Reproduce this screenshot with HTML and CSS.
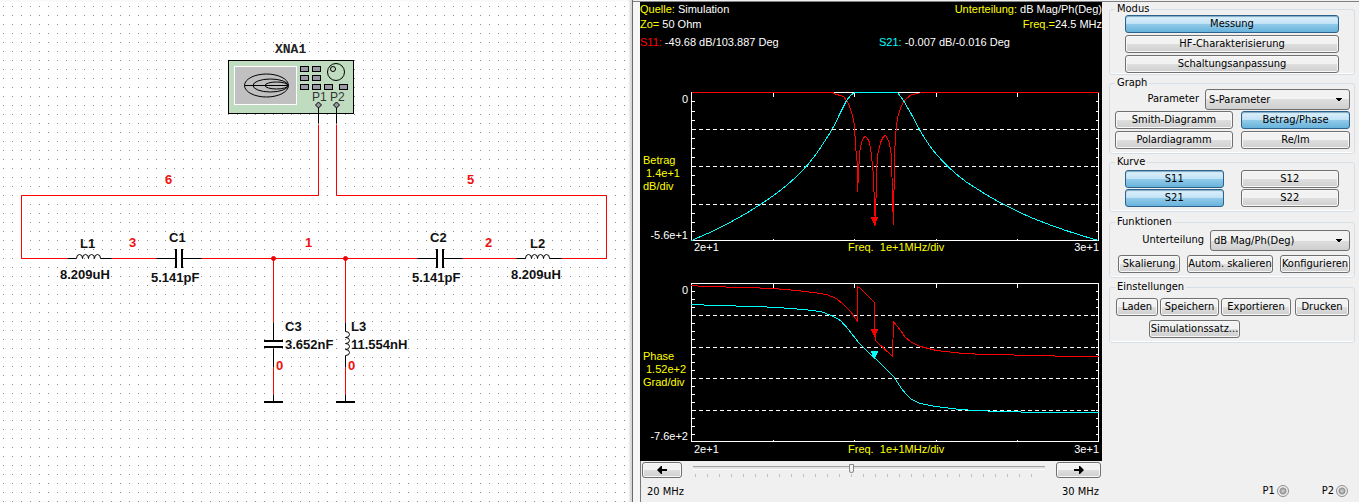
FILE: index.html
```html
<!DOCTYPE html>
<html lang="de">
<head>
<meta charset="UTF-8">
<meta name="viewport" content="width=device-width, initial-scale=1.0">
<title>Netzwerkanalysator XNA1</title>
<link rel="stylesheet" href="styles.css">
</head>
<body>

<main class="workspace">
    <section class="schematic">
        <svg class="circuit" role="img" aria-label="Schaltplan">
            <defs>
                <pattern id="grid" width="9" height="9" patternUnits="userSpaceOnUse">
                    <rect x="3" y="6" width="1" height="1" fill="#8c8c8c"/>
                </pattern>
            </defs>
            <rect width="100%" height="100%" fill="url(#grid)"/>

            <!-- Analysator -->
            <g transform="translate(.5 .5)">
                <rect x="228" y="60" width="125" height="53" fill="#c0dcc0" stroke="#000"/>
                <rect x="234" y="66" width="62" height="38" fill="#c0c0c0" stroke="#fff"/>
                <g fill="none" stroke="#000">
                    <ellipse cx="266" cy="85" rx="22" ry="11.5"/>
                    <ellipse cx="270" cy="85" rx="17.5" ry="6.5"/>
                    <ellipse cx="276" cy="85" rx="11.5" ry="3.5"/>
                    <path d="M244 85H287"/>
                    <circle cx="335.5" cy="71.5" r="8.5"/>
                    <circle cx="332.5" cy="68.5" r="2.5"/>
                </g>
                <g fill="#9a9aa6" stroke="#000">
                    <rect x="300" y="66" width="8" height="5"/>
                    <rect x="312" y="66" width="8" height="5"/>
                    <rect x="300" y="75" width="8" height="5"/>
                    <rect x="312" y="75" width="8" height="5"/>
                    <rect x="300" y="84" width="8" height="5"/>
                    <rect x="312" y="84" width="8" height="5"/>
                    <rect x="324" y="84" width="8" height="5"/>
                    <rect x="339" y="84" width="8" height="5"/>
                </g>
            </g>
            <text class="instrument-name" x="275" y="53">XNA1</text>
            <text class="port-name" x="312" y="101">P1</text>
            <text class="port-name" x="330" y="101">P2</text>

            <!-- Leitungen -->
            <g class="wire" transform="translate(.5 .5)">
                <path d="M318 124V195H21V258H67M111 258H156M201 258H417M462 258H516M561 258H606V195H336V124"/>
                <path d="M273 258V322M273 367V394M345 258V322M345 367V394"/>
                <circle class="node" cx="273" cy="258" r="2"/>
                <circle class="node" cx="345" cy="258" r="2"/>
            </g>

            <!-- Bauteile -->
            <g class="part" transform="translate(.5 .5)">
                <path d="M318 105V123M336 105V123"/>
                <path d="M67 258H76M100 258H111M156 258H175M182 258H201M417 258H436M443 258H462M516 258H525M549 258H561"/>
                <path d="M273 322V340M273 348V367M273 394V401M345 322V331M345 355V367M345 394V401"/>
                <path class="coil" d="M76 258a3 4 0 0 1 6 0a3 4 0 0 1 6 0a3 4 0 0 1 6 0a3 4 0 0 1 6 0"/>
                <path class="coil" d="M525 258a3 4 0 0 1 6 0a3 4 0 0 1 6 0a3 4 0 0 1 6 0a3 4 0 0 1 6 0"/>
                <path class="coil" d="M345 331a4 3 0 0 1 0 6a4 3 0 0 1 0 6a4 3 0 0 1 0 6a4 3 0 0 1 0 6"/>
                <path class="port" d="M315 104.5l3-3 3 3-3 3zM333 104.5l3-3 3 3-3 3z"/>
            </g>
            <g class="plate">
                <path d="M176 249V268M182 249V268M437 249V268M443 249V268"/>
                <path d="M264 341H283M264 347H283M264 402H283M336 402H355"/>
            </g>

            <g class="part-label">
                <text x="80" y="248">L1</text>
                <text x="60" y="279">8.209uH</text>
                <text x="169" y="242">C1</text>
                <text x="151" y="282">5.141pF</text>
                <text x="430" y="242">C2</text>
                <text x="412" y="282">5.141pF</text>
                <text x="530" y="248">L2</text>
                <text x="511" y="279">8.209uH</text>
                <text x="285" y="331">C3</text>
                <text x="285" y="349">3.652nF</text>
                <text x="351" y="331">L3</text>
                <text x="351" y="349">11.554nH</text>
            </g>
            <g class="net-label">
                <text x="165" y="184">6</text>
                <text x="467" y="184">5</text>
                <text x="129" y="247">3</text>
                <text x="305" y="247">1</text>
                <text x="485" y="247">2</text>
                <text x="276" y="370">0</text>
                <text x="348" y="370">0</text>
            </g>
        </svg>
    </section>

    <section class="analyser">
        <div class="measure">
            <div class="display">
                <div class="readout">
                    <span><b>Quelle:</b> Simulation</span>
                    <span><b>Unterteilung:</b> dB Mag/Ph(Deg)</span>
                </div>
                <div class="readout">
                    <span><b>Zo=</b> 50 Ohm</span>
                    <span><b>Freq.=</b>24.5 MHz</span>
                </div>
                <div class="cursor-values">
                    <span><b class="s11">S11:</b> -49.68 dB/103.887 Deg</span>
                    <span><b class="s21">S21:</b> -0.007 dB/-0.016 Deg</span>
                </div>

                <!-- Betrag -->
                <svg class="plot" viewBox="640 70 462 190" role="img" aria-label="Betrag">
                    <g class="frame" transform="translate(.5 .5)">
                        <path d="M691 92V240H1098V92z"/>
                        <path d="M773 92v4M854 92v4M936 92v4M1017 92v4M773 238v2M854 238v2M936 238v2M1017 238v2"/>
                        <path d="M691 101h3M691 111h3M691 120h3M691 129h3M691 138h3M691 148h3M691 157h3M691 166h3M691 175h3M691 185h3M691 194h3M691 204h3M691 213h3M691 222h3M691 231h3"/>
                        <path d="M1095 101h3M1095 111h3M1095 120h3M1095 129h3M1095 138h3M1095 148h3M1095 157h3M1095 166h3M1095 175h3M1095 185h3M1095 194h3M1095 204h3M1095 213h3M1095 222h3M1095 231h3"/>
                        <path class="dashed" d="M691 129H1098M691 166H1098M691 204H1098"/>
                    </g>
                    <g class="curve" transform="translate(.5 .5)">
                        <path class="s11" d="M691 92H833M919 92H1098"/>
                        <polyline class="s11" points="833,93 843,96 848,103 852,115 854,125 855,145 857,165 857,191 858,175 859,152 861,142 863,137 865,136 867,138 869,142 871,155 873,175 874,207 875,224 876,173 877,155 880,142 883,136 885,135 887,138 889,143 891,155 892,198 893,224 894,157 895,135 897,117 901,105 905,99 911,94 919,93"/>
                        <path class="s21" d="M691 240C718 229 748 213 773 195C790 183 804 170 816 153C825 140 834 126 838 116L846 100L850 95L854 92H897L903 100L911 114L919 129C924 138 930 147 936 154C950 170 962 180 976 188C994 200 1012 209 1033 218C1055 227 1080 235 1098 240"/>
                        <path class="marker s11" d="M871 217h6l-3 7z"/>
                    </g>
                    <g class="axis-value">
                        <text x="688" y="103" text-anchor="end">0</text>
                        <text x="688" y="239" text-anchor="end">-5.6e+1</text>
                        <text x="694" y="251">2e+1</text>
                        <text x="1099" y="251" text-anchor="end">3e+1</text>
                    </g>
                    <g class="axis-name">
                        <text x="643" y="164">Betrag</text>
                        <text x="646" y="177">1.4e+1</text>
                        <text x="643" y="190">dB/div</text>
                        <text x="848" y="251">Freq.&nbsp; 1e+1MHz/div</text>
                    </g>
                </svg>

                <!-- Phase -->
                <svg class="plot" viewBox="640 260 462 201" role="img" aria-label="Phase">
                    <g class="frame" transform="translate(.5 .5)">
                        <path d="M691 283V441H1098V283z"/>
                        <path d="M773 283v4M854 283v4M936 283v4M1017 283v4M773 439v2M854 439v2M936 439v2M1017 439v2"/>
                        <path d="M691 291h3M691 299h3M691 307h3M691 315h3M691 323h3M691 331h3M691 339h3M691 347h3M691 354h3M691 362h3M691 370h3M691 378h3M691 386h3M691 394h3M691 402h3M691 410h3M691 418h3M691 426h3M691 434h3"/>
                        <path d="M1095 291h3M1095 299h3M1095 307h3M1095 315h3M1095 323h3M1095 331h3M1095 339h3M1095 347h3M1095 354h3M1095 362h3M1095 370h3M1095 378h3M1095 386h3M1095 394h3M1095 402h3M1095 410h3M1095 418h3M1095 426h3M1095 434h3"/>
                        <path class="dashed" d="M691 315H1098M691 347H1098M691 378H1098M691 410H1098"/>
                    </g>
                    <g class="curve" transform="translate(.5 .5)">
                        <polyline class="s11" points="691,285 704,286 746,287 773,288 796,290 813,292 826,294 836,298 843,304 850,311 855,318 857,321 857,286 860,288 866,294 874,302 874,318 875,340 892,356 893,321 900,330 905,337 910,341 915,344 920,346 936,350 963,353 986,354 1040,355 1068,356 1098,356"/>
                        <polyline class="s21" points="691,304 715,305 755,306 777,307 803,309 820,311 831,315 840,320 848,329 858,342 870,354 875,358 883,366 893,376 901,388 905,393 910,398 915,401 920,403 935,406 960,409 975,410 1000,411 1041,412 1098,412"/>
                        <path class="marker s11" d="M871 329h6l-3 6z"/>
                        <path class="marker s21" d="M871 351h6l-3 6z"/>
                    </g>
                    <g class="axis-value">
                        <text x="688" y="294" text-anchor="end">0</text>
                        <text x="688" y="440" text-anchor="end">-7.6e+2</text>
                        <text x="694" y="453">2e+1</text>
                        <text x="1099" y="453" text-anchor="end">3e+1</text>
                    </g>
                    <g class="axis-name">
                        <text x="643" y="360">Phase</text>
                        <text x="646" y="373">1.52e+2</text>
                        <text x="643" y="386">Grad/div</text>
                        <text x="848" y="453">Freq.&nbsp; 1e+1MHz/div</text>
                    </g>
                </svg>
            </div>

            <div class="sweep">
                <button type="button" class="step" aria-label="Zurück">
                    <svg width="10" height="8" viewBox="0 0 10 8"><path d="M0 4l4-4h1v3h5v2h-5v3h-1z"/></svg>
                </button>
                <div class="slider">
                    <input type="range" min="20" max="30" step="0.1" value="24.5" aria-label="Frequenz in MHz">
                    <div class="ticks"></div>
                </div>
                <button type="button" class="step" aria-label="Vor">
                    <svg width="10" height="8" viewBox="0 0 10 8"><path d="M10 4l-4-4h-1v3h-5v2h5v3h1z"/></svg>
                </button>
            </div>
            <div class="range">
                <span>20 MHz</span>
                <span>30 MHz</span>
            </div>
        </div>

        <form class="controls">
            <fieldset>
                <legend>Modus</legend>
                <div class="modes">
                    <button type="button" class="active">Messung</button>
                    <button type="button">HF-Charakterisierung</button>
                    <button type="button">Schaltungsanpassung</button>
                </div>
            </fieldset>

            <fieldset>
                <legend>Graph</legend>
                <div class="field">
                    <label for="parameter">Parameter</label>
                    <select id="parameter">
                        <option>S-Parameter</option>
                    </select>
                </div>
                <div class="choices">
                    <button type="button">Smith-Diagramm</button>
                    <button type="button" class="active">Betrag/Phase</button>
                    <button type="button">Polardiagramm</button>
                    <button type="button">Re/Im</button>
                </div>
            </fieldset>

            <fieldset>
                <legend>Kurve</legend>
                <div class="traces">
                    <button type="button" class="active">S11</button>
                    <button type="button">S12</button>
                    <button type="button" class="active">S21</button>
                    <button type="button">S22</button>
                </div>
            </fieldset>

            <fieldset class="funktionen">
                <legend>Funktionen</legend>
                <div class="field">
                    <label for="unterteilung">Unterteilung</label>
                    <select id="unterteilung">
                        <option>dB Mag/Ph(Deg)</option>
                    </select>
                </div>
                <div class="actions">
                    <button type="button">Skalierung</button>
                    <button type="button">Autom. skalieren</button>
                    <button type="button">Konfigurieren</button>
                </div>
            </fieldset>

            <fieldset class="einstellungen">
                <legend>Einstellungen</legend>
                <div class="files">
                    <button type="button">Laden</button>
                    <button type="button">Speichern</button>
                    <button type="button">Exportieren</button>
                    <button type="button">Drucken</button>
                </div>
                <button type="button" class="sim">Simulationssatz...</button>
            </fieldset>

            <div class="ports">
                <label>P1<input type="radio" name="port1"></label>
                <label>P2<input type="radio" name="port2"></label>
            </div>
        </form>
    </section>
</main>

</body>
</html>
```

FILE: styles.css
```css
* {
    box-sizing: border-box;
}
body {
    margin: 0;
    background-color: #f0f0f0;
    color: #000;
    font-family: "DejaVu Sans Condensed", "Open Sans", sans-serif;
    font-size: 11px;
}
button, select, input {
    font: inherit;
    color: inherit;
    margin: 0;
}
.workspace {
    display: flex;
    min-height: 100vh;
}

/* Schaltplan */
.schematic {
    flex: 1;
    display: flex;
    background-color: #fff;
    box-shadow: inset -3px 0 3px -1px #d0d0d0;
}
.circuit {
    flex: 1;
    min-width: 0;
    font-family: "Liberation Sans", Arial, sans-serif;
}
.instrument-name {
    font: bold 13px "Liberation Mono", monospace;
    fill: #222;
}
.port-name {
    font-size: 12px;
    fill: #333;
}
.part-label, .net-label {
    font-size: 13px;
    font-weight: bold;
    fill: #111;
}
.net-label {
    fill: #f01010;
}
.wire {
    fill: none;
    stroke: #f00;
}
.wire .node {
    fill: #e00000;
}
.part {
    fill: none;
    stroke: #000;
}
.part .port {
    fill: #9a9aa6;
}
.plate {
    stroke: #000;
    stroke-width: 2;
}

/* Analysator */
.analyser {
    flex: 0 1 727px;
    display: flex;
    border-left: 1px solid #6a6a6a;
    box-shadow: inset 0 1px #f0f0f0, inset 0 2px #808080;
    padding-top: 2px;
}
.measure {
    flex: 1;
    border-left: 7px solid #f6f6f6;
    box-shadow: inset 1px 0 #777;
}
.display {
    background-color: #000;
    color: #fff;
    font: 11px/15px "Liberation Sans", Arial, sans-serif;
}
.display b {
    font-weight: normal;
    color: #ff0;
}
.readout {
    display: flex;
    justify-content: space-between;
}
.cursor-values {
    display: grid;
    grid-template-columns: 239px 1fr;
    padding: 3px 0 20px;
}
.cursor-values .s11 {
    color: #f00;
}
.cursor-values .s21 {
    color: #0ff;
}
.plot {
    display: block;
    width: 100%;
}
.frame {
    fill: none;
    stroke: #fff;
}
.dashed {
    stroke-dasharray: 4 3;
}
.curve {
    fill: none;
}
.curve .s11 {
    stroke: #f00;
}
.curve .s21 {
    stroke: #0ff;
}
.curve .marker.s11 {
    fill: #f00;
}
.curve .marker.s21 {
    fill: #0ff;
}
.frame, .curve {
    shape-rendering: crispEdges;
}
.axis-value {
    fill: #fff;
}
.axis-name {
    fill: #ff0;
}
.sweep {
    display: flex;
    align-items: flex-start;
    gap: 11px;
    padding: 1px 1px 0 2px;
}
.slider {
    flex: 1;
    padding-top: 1px;
}
.slider input {
    appearance: none;
    display: block;
    width: 100%;
    height: 10px;
    background: none;
}
.slider input::-webkit-slider-runnable-track {
    height: 4px;
    background-color: #e4e4e4;
    border-top: 1px solid #a0a0a0;
    border-bottom: 1px solid #fff;
}
.slider input::-webkit-slider-thumb {
    appearance: none;
    width: 5px;
    height: 9px;
    margin-top: -3px;
    border: 1px solid #888;
    border-radius: 1px 1px 3px 3px;
    background-color: #f4f4f4;
}
.ticks {
    height: 3px;
    margin: 1px 2px 0;
    background: repeating-linear-gradient(to right, #c0c0c0 0 1px, transparent 1px 12px);
}
.range {
    display: flex;
    justify-content: space-between;
    padding: 7px 3px 0 7px;
    line-height: 14px;
}

/* Bedienfeld */
.controls {
    flex: 0 0 257px;
    display: flex;
    flex-direction: column;
    gap: 2px;
    padding: 1px 4px 3px 7px;
}
fieldset {
    margin: 0;
    padding: 0 4px 4px 5px;
    border: 1px solid #d5dfe5;
    border-radius: 3px;
    box-shadow: inset 0 -1px #fff;
    min-width: 0;
}
legend {
    padding: 0 2px;
    line-height: 12px;
}
button {
    height: 18px;
    padding: 0;
    line-height: 14px;
    white-space: nowrap;
    border: 1px solid #707070;
    border-radius: 3px;
    background: linear-gradient(#f2f2f2 0 50%, #dedede 50%, #cfcfcf);
    box-shadow: inset 0 0 0 1px #f8f8f8;
    cursor: pointer;
}
button.active {
    border-color: #2c628b;
    background: linear-gradient(#e0f1fb, #bfe2f6 50%, #93cbea 50%, #68b3db);
    box-shadow: inset 0 1px 1px #7fa9c4;
}
.step {
    flex: 0 0 40px;
    height: 16px;
    line-height: 8px;
}
.step:last-child {
    flex-basis: 45px;
}
select {
    appearance: none;
    height: 21px;
    padding: 0 6px 0 3px;
    border: 1px solid #707070;
    border-radius: 3px;
    background:
        linear-gradient(to bottom right, #000 50%, transparent 50%) right 6px center / 4px 4px no-repeat,
        linear-gradient(to bottom left, #000 50%, transparent 50%) right 10px center / 4px 4px no-repeat,
        linear-gradient(#f2f2f2 0 50%, #dedede 50%, #cfcfcf);
}
.field {
    display: flex;
    justify-content: flex-end;
    gap: 6px;
}
.field label {
    line-height: 20px;
}
.modes {
    display: grid;
    gap: 2px;
    padding: 0 11px 0 10px;
}
fieldset:first-child {
    padding-bottom: 1px;
}
#parameter {
    width: 145px;
}
.choices {
    display: grid;
    grid-template-columns: 118px 1fr;
    gap: 2px 8px;
    margin-top: 1px;
}
.traces {
    display: grid;
    grid-template-columns: 1fr 1fr;
    gap: 1px 17px;
    padding: 2px 11px 0 10px;
}
.funktionen {
    margin-top: 2px;
}
.funktionen .field {
    padding-top: 2px;
}
#unterteilung {
    width: 140px;
}
.actions {
    display: grid;
    grid-template-columns: 62px 86px 1fr;
    gap: 7px;
    margin-top: 4px;
    padding-left: 3px;
}
.einstellungen {
    margin-top: 1px;
}
.files {
    display: grid;
    grid-template-columns: 42px 59px 70px 1fr;
    gap: 2px;
    margin-bottom: 4px;
    padding: 5px 1px 0;
}
.files button:last-child {
    margin-left: 2px;
}
.sim {
    display: block;
    width: 91px;
    margin-left: 34px;
}
.ports {
    display: flex;
    justify-content: flex-end;
    gap: 33px;
    margin-top: auto;
    padding-right: 7px;
}
.ports label {
    display: flex;
    align-items: center;
    gap: 2px;
    line-height: 16px;
}
.ports input {
    appearance: none;
    width: 12px;
    height: 12px;
    border: 1px solid #8e8f8f;
    border-radius: 50%;
    background: radial-gradient(#d8d8d8, #909090 3px, #f0f0f0 4px);
}
```
